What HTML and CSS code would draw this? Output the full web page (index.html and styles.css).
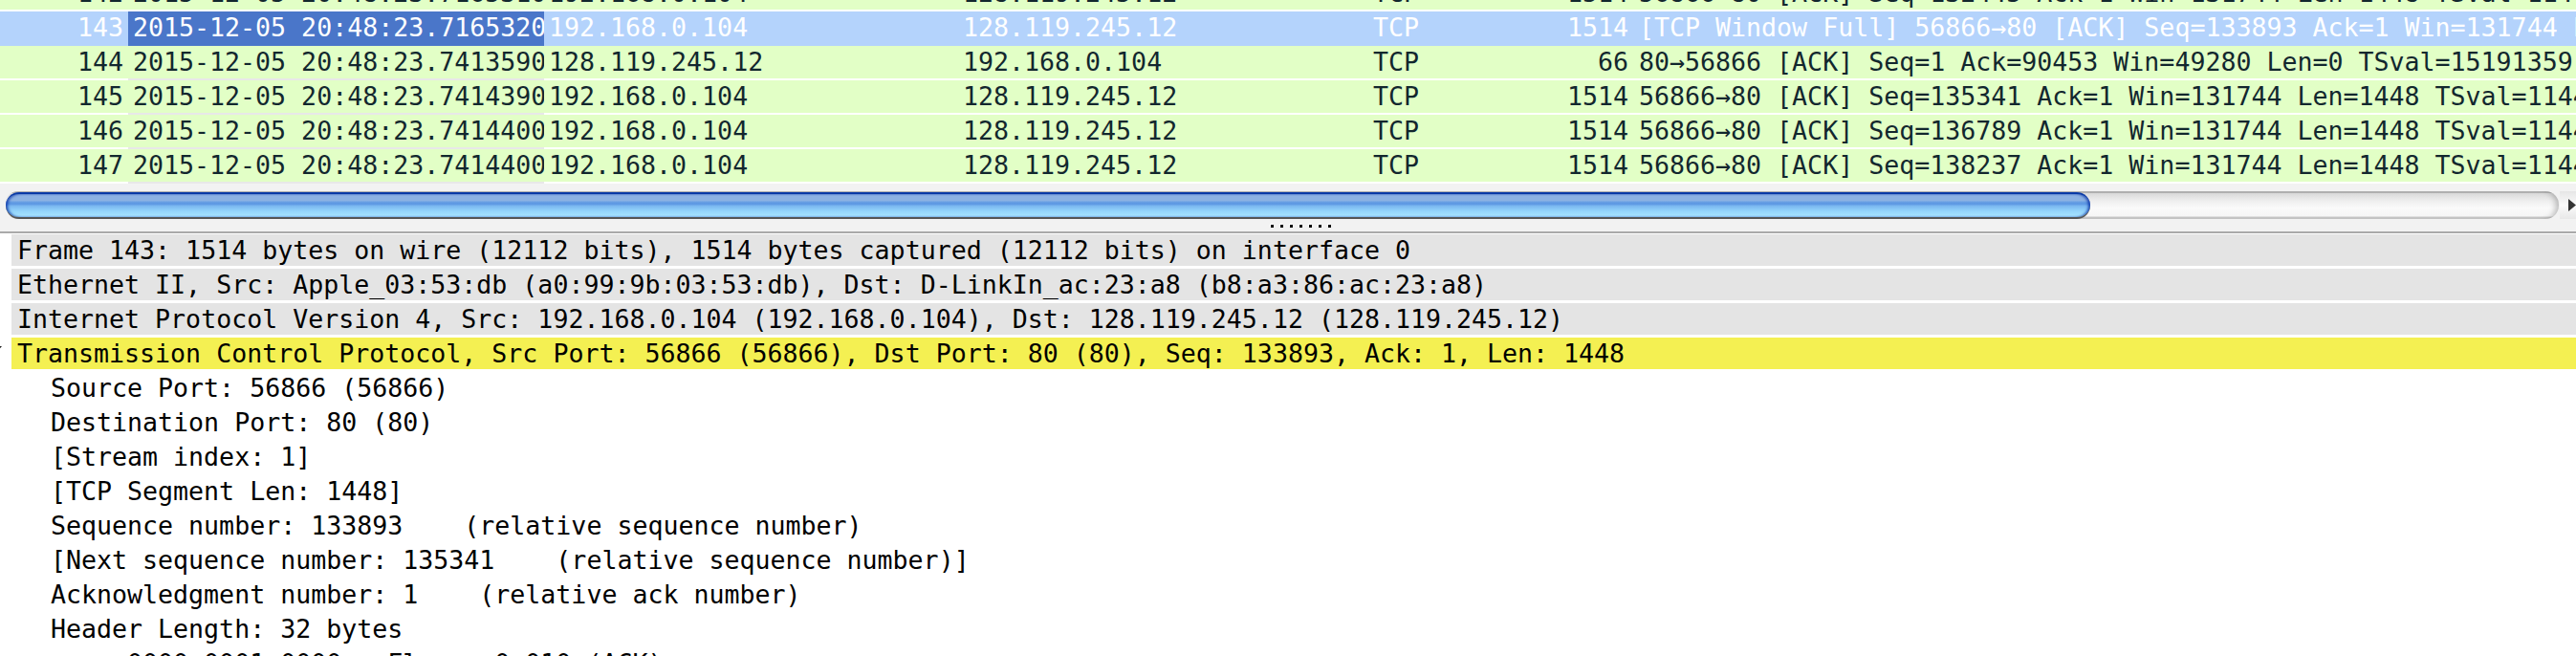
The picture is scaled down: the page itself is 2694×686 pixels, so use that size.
FILE: index.html
```html
<!DOCTYPE html>
<html>
<head>
<meta charset="utf-8">
<link rel="stylesheet" href="styles.css">
</head>
<body>
<div class="plist">
  <div class="plist-rows">
    <div class="prow first"><span class="c-no">142</span><span class="c-time">2015-12-05 20:48:23.7165310</span><span>192.168.0.104</span><span>128.119.245.12</span><span>TCP</span><span class="c-len">1514</span><span class="c-info">56866→80 [ACK] Seq=132445 Ack=1 Win=131744 Len=1448 TSval=1144</span></div>
    <div class="prow sel"><span class="c-no">143</span><span class="c-time">2015-12-05 20:48:23.7165320</span><span>192.168.0.104</span><span>128.119.245.12</span><span>TCP</span><span class="c-len">1514</span><span class="c-info">[TCP Window Full] 56866→80 [ACK] Seq=133893 Ack=1 Win=131744 Len=1448</span></div>
    <div class="prow"><span class="c-no">144</span><span class="c-time">2015-12-05 20:48:23.7413590</span><span>128.119.245.12</span><span>192.168.0.104</span><span>TCP</span><span class="c-len">66</span><span class="c-info">80→56866 [ACK] Seq=1 Ack=90453 Win=49280 Len=0 TSval=15191359</span></div>
    <div class="prow"><span class="c-no">145</span><span class="c-time">2015-12-05 20:48:23.7414390</span><span>192.168.0.104</span><span>128.119.245.12</span><span>TCP</span><span class="c-len">1514</span><span class="c-info">56866→80 [ACK] Seq=135341 Ack=1 Win=131744 Len=1448 TSval=1144</span></div>
    <div class="prow"><span class="c-no">146</span><span class="c-time">2015-12-05 20:48:23.7414400</span><span>192.168.0.104</span><span>128.119.245.12</span><span>TCP</span><span class="c-len">1514</span><span class="c-info">56866→80 [ACK] Seq=136789 Ack=1 Win=131744 Len=1448 TSval=1144</span></div>
    <div class="prow"><span class="c-no">147</span><span class="c-time">2015-12-05 20:48:23.7414400</span><span>192.168.0.104</span><span>128.119.245.12</span><span>TCP</span><span class="c-len">1514</span><span class="c-info">56866→80 [ACK] Seq=138237 Ack=1 Win=131744 Len=1448 TSval=1144</span></div>
  </div>
</div>
<div class="hscroll">
  <div class="trough"><div class="thumb"></div></div>
  <div class="arrow-btn"><svg width="17" height="29" viewBox="0 0 17 29"><polygon points="9,8 17,14.5 9,21" fill="#333"/></svg></div>
</div>
<div class="handle">
  <div class="dots"><i></i><i></i><i></i><i></i><i></i><i></i><i></i></div>
</div>
<div class="details">
  <div class="drow">Frame 143: 1514 bytes on wire (12112 bits), 1514 bytes captured (12112 bits) on interface 0</div>
  <div class="drow">Ethernet II, Src: Apple_03:53:db (a0:99:9b:03:53:db), Dst: D-LinkIn_ac:23:a8 (b8:a3:86:ac:23:a8)</div>
  <div class="drow">Internet Protocol Version 4, Src: 192.168.0.104 (192.168.0.104), Dst: 128.119.245.12 (128.119.245.12)</div>
  <div class="drow hl"><svg class="exp" width="18" height="33" viewBox="0 0 18 33"><polygon points="-12,9 2,9 -5,17" fill="#222"/></svg>Transmission Control Protocol, Src Port: 56866 (56866), Dst Port: 80 (80), Seq: 133893, Ack: 1, Len: 1448</div>
  <div class="drow child">Source Port: 56866 (56866)</div>
  <div class="drow child">Destination Port: 80 (80)</div>
  <div class="drow child">[Stream index: 1]</div>
  <div class="drow child">[TCP Segment Len: 1448]</div>
  <div class="drow child">Sequence number: 133893    (relative sequence number)</div>
  <div class="drow child">[Next sequence number: 135341    (relative sequence number)]</div>
  <div class="drow child">Acknowledgment number: 1    (relative ack number)</div>
  <div class="drow child">Header Length: 32 bytes</div>
  <div class="drow child">.... 0000 0001 0000 = Flags: 0x010 (ACK)</div>
</div>
</body>
</html>
```

FILE: styles.css
```css
html, body {
  margin: 0;
  padding: 0;
}
body {
  width: 2694px;
  height: 686px;
  overflow: hidden;
  background: #fff;
  font-family: "DejaVu Sans Mono", monospace;
  font-size: 26.6px;
}

/* packet list */
.plist {
  height: 192px;
  overflow: hidden;
}
.plist-rows {
  margin-top: -24px;
}
.prow {
  display: grid;
  grid-template-columns: 134px 435px 433px 429px 159px 118px 986px;
  height: 36px;
  color: #12272e;
}
.prow > span {
  display: block;
  height: 34px;
  line-height: 34px;
  padding: 0 5px;
  background: #e2ffc6;
  border-bottom: 2px solid #fff;
  white-space: nowrap;
  overflow: hidden;
}
.prow > .c-no,
.prow > .c-len {
  text-align: right;
}
.prow > .c-time {
  border-bottom-color: #e8e8e8;
}
.prow.first > .c-time {
  border-bottom-color: #fff;
}
.prow > .c-info {
  padding-left: 6px;
}
.prow.sel > span {
  background: #b4d3fc;
  border-bottom-color: #b4d3fc;
  color: #fff;
}
.prow.sel > .c-time {
  background: #4a76c9;
  border-bottom-color: #4a76c9;
}

/* horizontal scrollbar */
.hscroll {
  display: flex;
  height: 29px;
  padding-top: 8px;
  background: #f2f2f2;
}
.trough {
  width: 2671px;
  height: 29px;
  margin-left: 5px;
  border-radius: 14px;
  background: linear-gradient(#b2b2b2 0, #b2b2b2 2px, #d9d9d9 2px, #efefef 35%, #fafafa 60%, #f6f6f6 90%, #c6c6c6 93%, #c6c6c6 100%);
  box-shadow: inset -7px 0 6px -4px rgba(0, 0, 0, 0.25);
}
.thumb {
  width: 2180px;
  height: 24px;
  margin-left: 1px;
  margin-top: 1px;
  border-radius: 14px;
  border-top: 2px solid #0a3aa6;
  border-bottom: 2px solid #555;
  background: linear-gradient(#8cb2e3 0, #8cb2e3 30%, #6ea3e4 32%, #5a95e2 42%, #7bb8f0 52%, #95d6fc 75%, #a9e6ff 100%);
  box-shadow: inset 3px 0 3px -1px rgba(0, 40, 160, 0.8), inset -3px 0 3px -1px rgba(0, 40, 160, 0.8);
}
.arrow-btn {
  width: 17px;
  height: 29px;
  margin-left: 1px;
  background: linear-gradient(#e6e6e6, #fafafa 50%, #e8e8e8);
}
.arrow-btn svg {
  display: block;
}

/* paned handle */
.handle {
  height: 13px;
  background: #f2f2f2;
  border-bottom: 2px solid #aaa;
  display: flex;
  justify-content: center;
}
.dots {
  display: flex;
  gap: 7px;
  margin-top: 6px;
  margin-left: 26px;
}
.dots i {
  display: block;
  width: 3px;
  height: 3px;
  background: #000;
  box-shadow: -1px -1px 0 #fff;
}

/* packet details */
.details {
  padding-top: 1px;
}
.drow {
  height: 33px;
  line-height: 33px;
  margin: 0 0 3px 12px;
  padding-left: 6px;
  background: #e4e4e4;
  color: #000;
  white-space: pre;
}
.drow.hl {
  background: #f4f052;
}
.drow.child {
  background: transparent;
  padding-left: 41px;
}
.exp {
  vertical-align: top;
  margin-left: -18px;
  margin-right: 0;
}
```
